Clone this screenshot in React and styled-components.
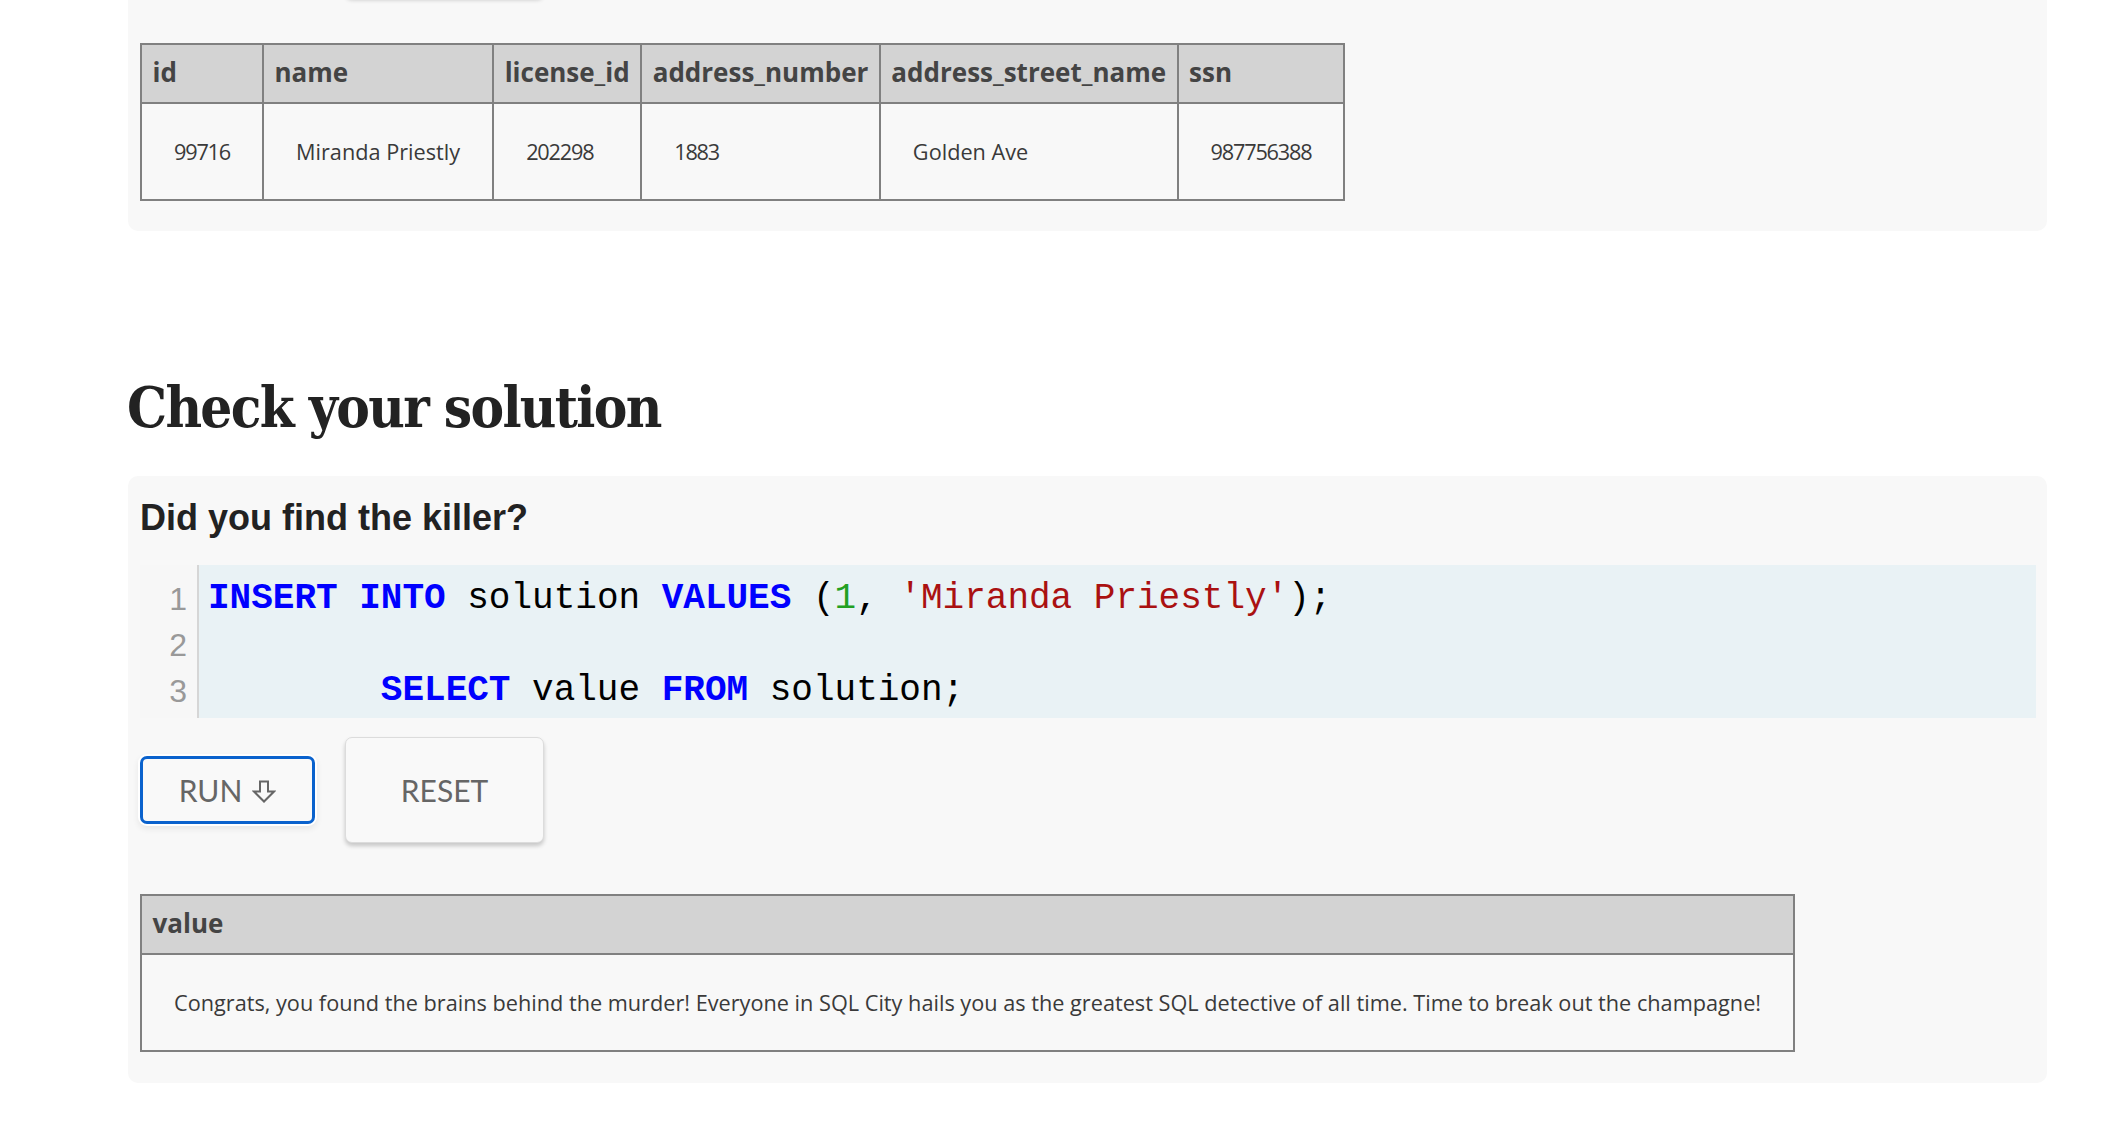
import React from 'react';
import styled, { createGlobalStyle } from 'styled-components';

const GlobalStyle = createGlobalStyle`
  html, body { margin: 0; padding: 0; background: #ffffff; }
  body { font-family: "Open Sans", "Liberation Sans", sans-serif; }
`;

const Page = styled.main`
  margin-top: -121px;
  padding: 0 71px 40px 128px;
`;

const Panel = styled.section`
  background: #f8f8f8;
  border-radius: 10px;
  padding: 12px 11px ${(p) => p.$bottom}px 12px;
`;

const SectionTitle = styled.h2`
  font-family: "DejaVu Serif Condensed", "DejaVu Serif", serif;
  font-weight: bold;
  font-size: 56px;
  letter-spacing: -1.7px;
  line-height: 72px;
  color: #222222;
  margin: 140px 0 33px -1px;
`;

const Prompt = styled.h3`
  font-family: "Liberation Sans", Arial, sans-serif;
  font-weight: bold;
  font-size: 36px;
  line-height: 41px;
  color: #222222;
  margin: 9px 0 27px;
`;

const Editor = styled.div`
  display: flex;
  background: #e9f2f5;
  line-height: 46px;
`;

const Gutter = styled.div`
  width: 47px;
  padding: 11px 10px 4px 0;
  background: #f7f7f7;
  border-right: 2px solid #d6d6d6;
  font-family: "Liberation Sans", Arial, sans-serif;
  font-size: 32px;
  color: #999999;
  text-align: right;
`;

const Code = styled.div`
  flex: 1;
  padding: 11px 0 4px 9px;
  font-family: "Liberation Mono", "Courier New", monospace;
  font-size: 36px;
  color: #000000;
`;

const CodeLine = styled.div`
  white-space: pre;
  height: 46px;
`;

const Kw = styled.span`
  color: #0000ff;
  font-weight: bold;
`;

const Num = styled.span`
  color: #22a022;
`;

const Str = styled.span`
  color: #aa1111;
`;

const ButtonRow = styled.div`
  display: flex;
  align-items: center;
  gap: 30px;
  margin: ${(p) => p.$top}px 0 ${(p) => p.$bottom}px;
`;

const Button = styled.button`
  box-sizing: border-box;
  display: flex;
  align-items: center;
  justify-content: center;
  gap: 10px;
  font-family: Lato, "Open Sans", sans-serif;
  font-size: 30px;
  color: #666666;
  background: #f9f9f9;
  cursor: pointer;
  padding: 0;
  width: ${(p) => (p.$primary ? 175 : 199)}px;
  height: ${(p) => (p.$primary ? 68 : 106)}px;
  border-radius: 7px;
  border: ${(p) => (p.$primary ? '3px solid #0a62cd' : '1px solid #dcdcdc')};
  box-shadow: ${(p) =>
    p.$primary
      ? '0 0 0 2px #ffffff, 0 3px 6px 2px rgba(0,0,0,0.07)'
      : '0 3px 4px rgba(0,0,0,0.2)'};
`;

const ArrowIcon = styled.svg`
  width: 24px;
  height: 23px;
  margin-top: 2px;
  flex: none;
`;

const Table = styled.table`
  border-collapse: collapse;
  border: 2px solid #808080;
  color: #333333;
`;

const Th = styled.th`
  background: #d3d3d3;
  border: 2px solid #808080;
  font-weight: bold;
  font-size: 26px;
  line-height: 34px;
  color: #444444;
  text-align: left;
  padding: 10px 10.5px 13px;
  white-space: nowrap;
`;

const Td = styled.td`
  border: 2px solid #808080;
  font-size: 21.7px;
  line-height: 29px;
  color: #3a3a3a;
  text-align: left;
  padding: 33px 32px;
  white-space: nowrap;
  letter-spacing: ${(p) => (p.$num ? '-1.2px' : 'normal')};
`;

function DataTable({ columns, rows }) {
  return (
    <Table>
      <thead>
        <tr>
          {columns.map((c) => (
            <Th key={c}>{c}</Th>
          ))}
        </tr>
      </thead>
      <tbody>
        {rows.map((r, i) => (
          <tr key={i}>
            {r.map((v, j) => (
              <Td key={j} $num={/^\d+$/.test(v)}>
                {v}
              </Td>
            ))}
          </tr>
        ))}
      </tbody>
    </Table>
  );
}

function DownArrow() {
  return (
    <ArrowIcon viewBox="0 0 24 23" aria-hidden="true">
      <path
        d="M8 1.5 H16 V11.5 H22 L12 21.5 L2 11.5 H8 Z"
        fill="none"
        stroke="#666666"
        strokeWidth="2"
        strokeLinejoin="miter"
      />
    </ArrowIcon>
  );
}

function Buttons({ top, bottom, offscreen }) {
  return (
    <ButtonRow $top={top} $bottom={bottom} aria-hidden={offscreen ? 'true' : undefined}>
      <Button $primary aria-label="RUN">
        {offscreen ? null : (
          <>
            RUN
            <DownArrow />
          </>
        )}
      </Button>
      <Button aria-label="RESET">{offscreen ? null : 'RESET'}</Button>
    </ButtonRow>
  );
}

export default function App() {
  return (
    <>
      <GlobalStyle />
      <Page>
        <Panel $bottom={30}>
          <Buttons top={0} bottom={46} offscreen />
          <DataTable
            columns={['id', 'name', 'license_id', 'address_number', 'address_street_name', 'ssn']}
            rows={[['99716', 'Miranda Priestly', '202298', '1883', 'Golden Ave', '987756388']]}
          />
        </Panel>

        <SectionTitle>Check your solution</SectionTitle>

        <Panel $bottom={31}>
          <Prompt>Did you find the killer?</Prompt>
          <Editor>
            <Gutter>
              <div>1</div>
              <div>2</div>
              <div>3</div>
            </Gutter>
            <Code>
              <CodeLine>
                <Kw>INSERT</Kw> <Kw>INTO</Kw> solution <Kw>VALUES</Kw> (<Num>1</Num>, <Str>'Miranda Priestly'</Str>);
              </CodeLine>
              <CodeLine> </CodeLine>
              <CodeLine>
                {'        '}
                <Kw>SELECT</Kw> value <Kw>FROM</Kw> solution;
              </CodeLine>
            </Code>
          </Editor>
          <Buttons top={19} bottom={51} />
          <DataTable
            columns={['value']}
            rows={[
              [
                'Congrats, you found the brains behind the murder! Everyone in SQL City hails you as the greatest SQL detective of all time. Time to break out the champagne!',
              ],
            ]}
          />
        </Panel>
      </Page>
    </>
  );
}
